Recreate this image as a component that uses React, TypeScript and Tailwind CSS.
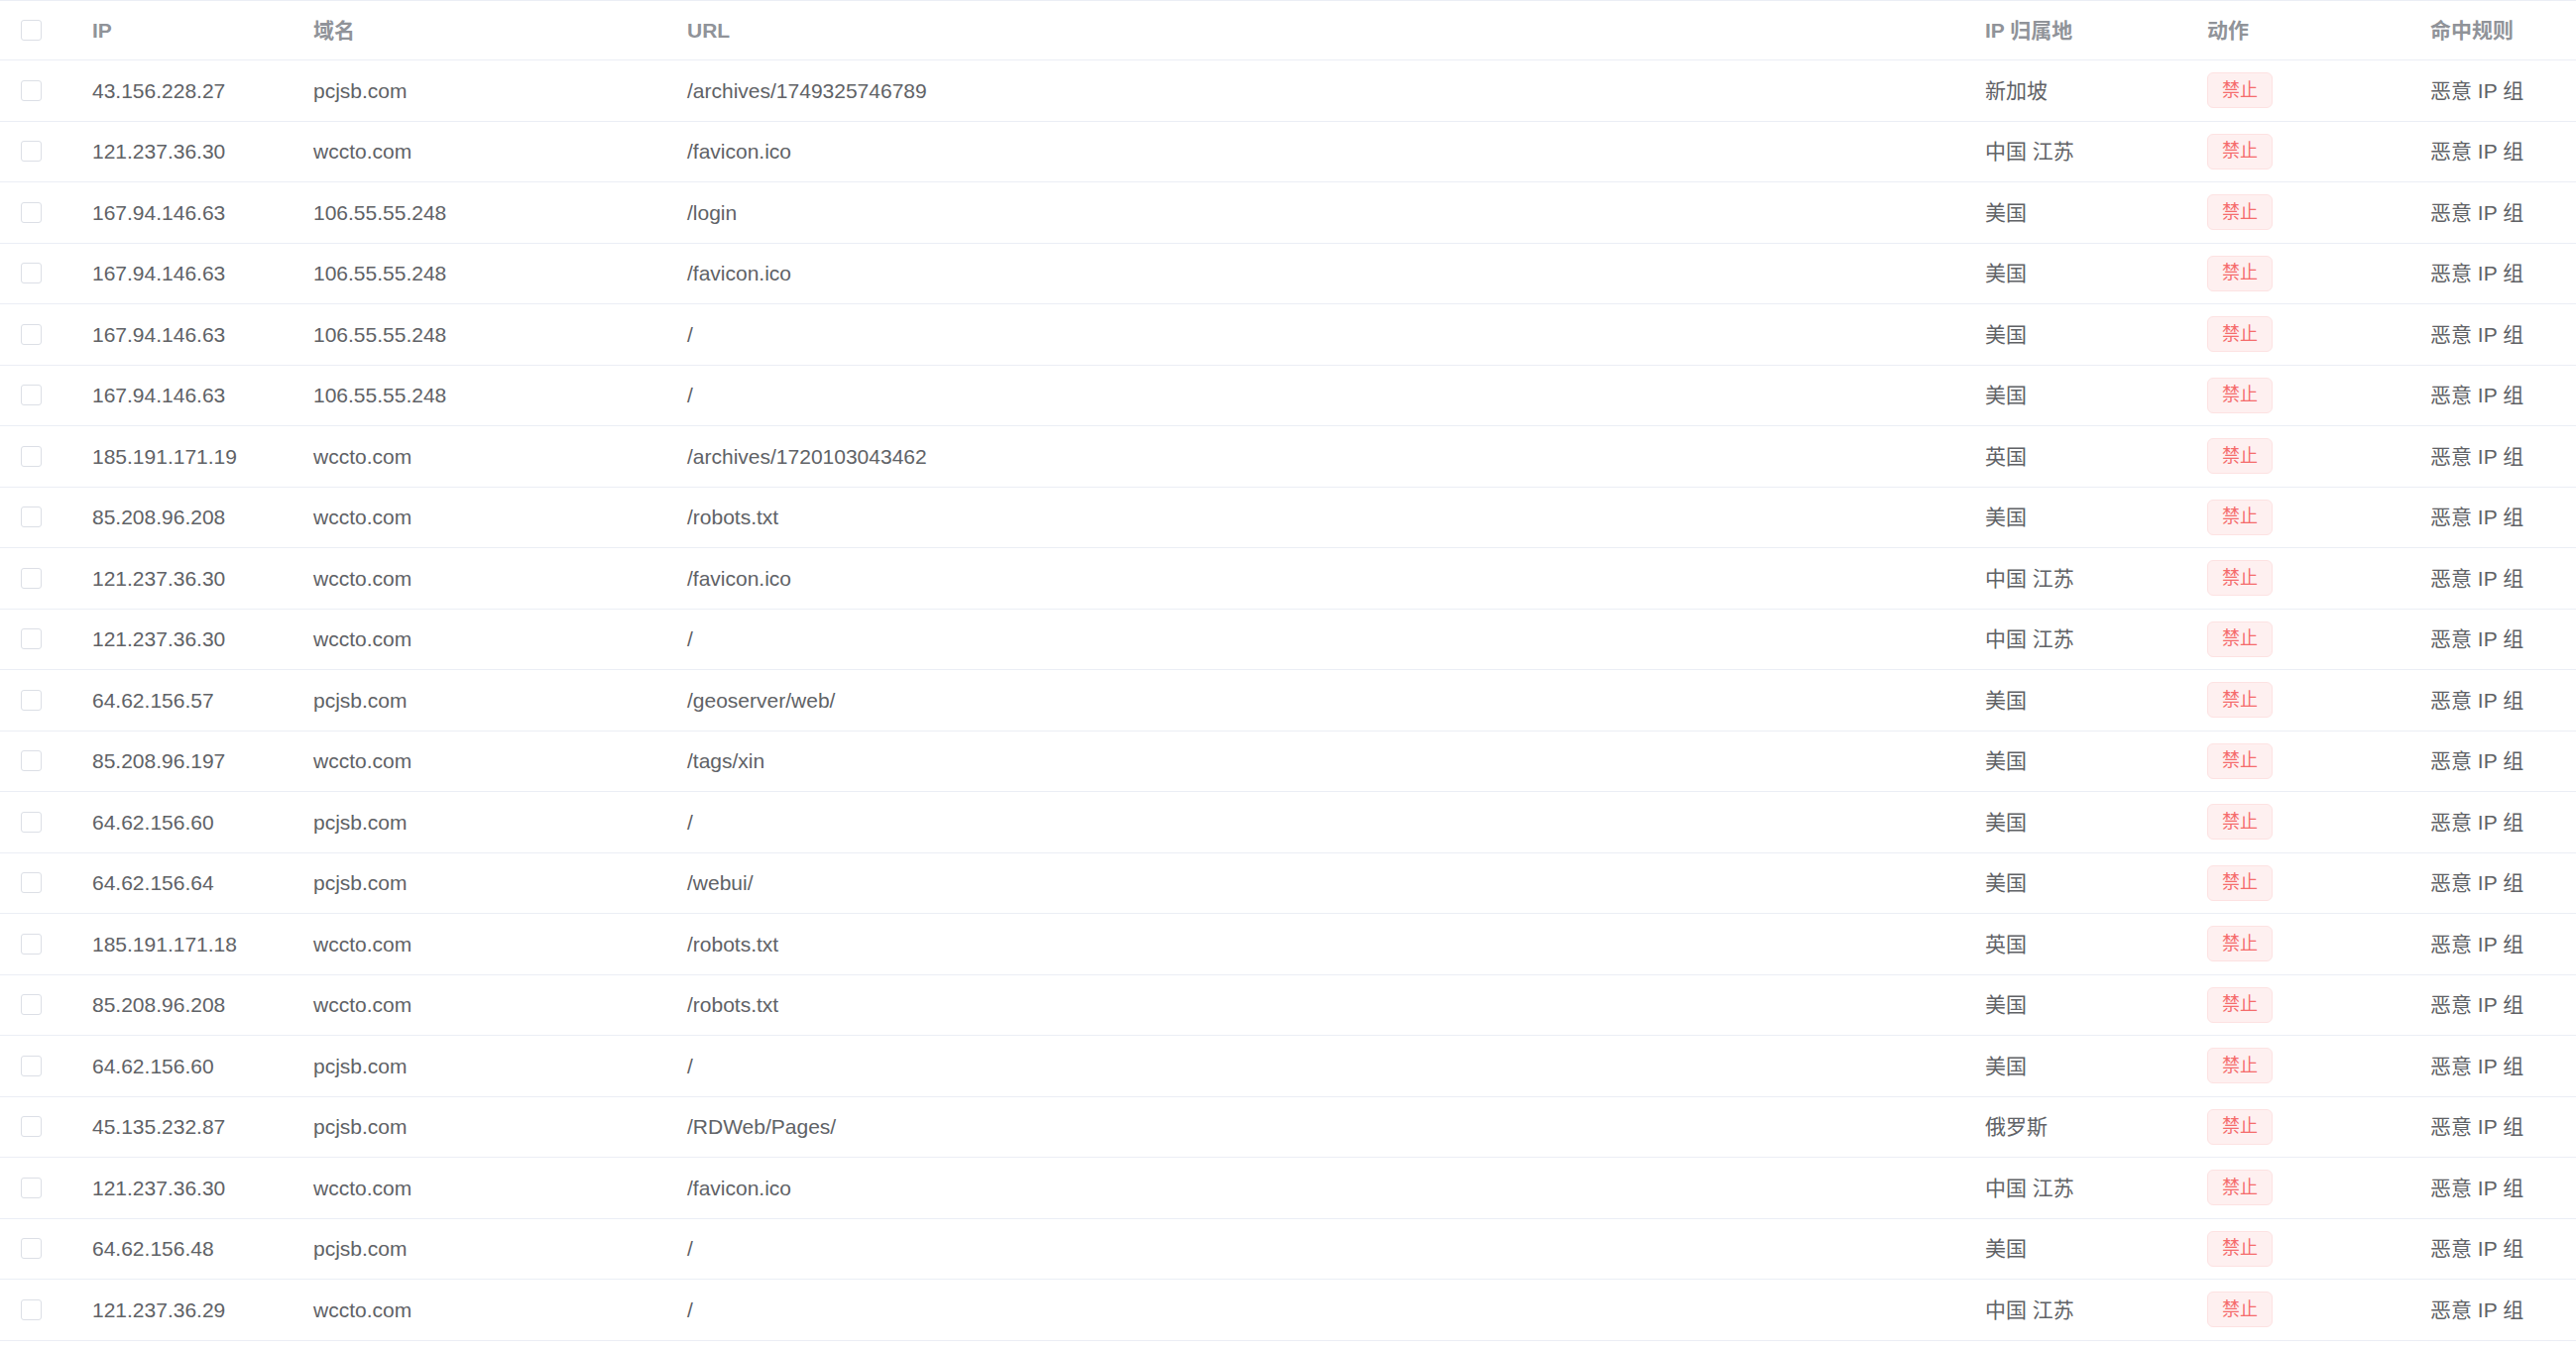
import React from 'react';

type Hit = { ip: string; host: string; url: string; region: string };

const hits: Hit[] = [
  { ip: '43.156.228.27', host: 'pcjsb.com', url: '/archives/1749325746789', region: '新加坡' },
  { ip: '121.237.36.30', host: 'wccto.com', url: '/favicon.ico', region: '中国 江苏' },
  { ip: '167.94.146.63', host: '106.55.55.248', url: '/login', region: '美国' },
  { ip: '167.94.146.63', host: '106.55.55.248', url: '/favicon.ico', region: '美国' },
  { ip: '167.94.146.63', host: '106.55.55.248', url: '/', region: '美国' },
  { ip: '167.94.146.63', host: '106.55.55.248', url: '/', region: '美国' },
  { ip: '185.191.171.19', host: 'wccto.com', url: '/archives/1720103043462', region: '英国' },
  { ip: '85.208.96.208', host: 'wccto.com', url: '/robots.txt', region: '美国' },
  { ip: '121.237.36.30', host: 'wccto.com', url: '/favicon.ico', region: '中国 江苏' },
  { ip: '121.237.36.30', host: 'wccto.com', url: '/', region: '中国 江苏' },
  { ip: '64.62.156.57', host: 'pcjsb.com', url: '/geoserver/web/', region: '美国' },
  { ip: '85.208.96.197', host: 'wccto.com', url: '/tags/xin', region: '美国' },
  { ip: '64.62.156.60', host: 'pcjsb.com', url: '/', region: '美国' },
  { ip: '64.62.156.64', host: 'pcjsb.com', url: '/webui/', region: '美国' },
  { ip: '185.191.171.18', host: 'wccto.com', url: '/robots.txt', region: '英国' },
  { ip: '85.208.96.208', host: 'wccto.com', url: '/robots.txt', region: '美国' },
  { ip: '64.62.156.60', host: 'pcjsb.com', url: '/', region: '美国' },
  { ip: '45.135.232.87', host: 'pcjsb.com', url: '/RDWeb/Pages/', region: '俄罗斯' },
  { ip: '121.237.36.30', host: 'wccto.com', url: '/favicon.ico', region: '中国 江苏' },
  { ip: '64.62.156.48', host: 'pcjsb.com', url: '/', region: '美国' },
  { ip: '121.237.36.29', host: 'wccto.com', url: '/', region: '中国 江苏' },
];

const cols = 'grid grid-cols-[75px_223px_377px_1309px_224px_225px_1fr] items-center';

const Checkbox = () => (
  <div className="pl-[21px]">
    <span className="block w-[21px] h-[21px] rounded-[3px] border border-[#dcdfe6] bg-white" />
  </div>
);

export default function App() {
  return (
    <div
      className="w-full bg-white text-[21px] text-[#606266]"
      style={{ fontFamily: '"Liberation Sans", Arial, "Noto Sans CJK SC", sans-serif' }}
    >
      {/* Header */}
      <div className={`${cols} h-[61px] border-y border-[#ebeef5] font-bold text-[#909399]`}>
        <Checkbox />
        <div className="px-[18px]">IP</div>
        <div className="px-[18px]">域名</div>
        <div className="px-[18px]">URL</div>
        <div className="px-[18px]">IP 归属地</div>
        <div className="px-[18px]">动作</div>
        <div className="px-[18px]">命中规则</div>
      </div>

      {/* Rows */}
      {hits.map((h, i) => (
        <div key={i} className={`${cols} h-[61.5px] border-b border-[#ebeef5]`}>
          <Checkbox />
          <div className="px-[18px]">{h.ip}</div>
          <div className="px-[18px]">{h.host}</div>
          <div className="px-[18px]">{h.url}</div>
          <div className="px-[18px]">{h.region}</div>
          <div className="px-[18px]">
            <span className="inline-flex items-center h-[36px] px-[14px] rounded-[6px] border border-[#fde2e2] bg-[#fef0f0] text-[18px] text-[#f56c6c]">
              禁止
            </span>
          </div>
          <div className="px-[18px]">恶意 IP 组</div>
        </div>
      ))}
    </div>
  );
}
